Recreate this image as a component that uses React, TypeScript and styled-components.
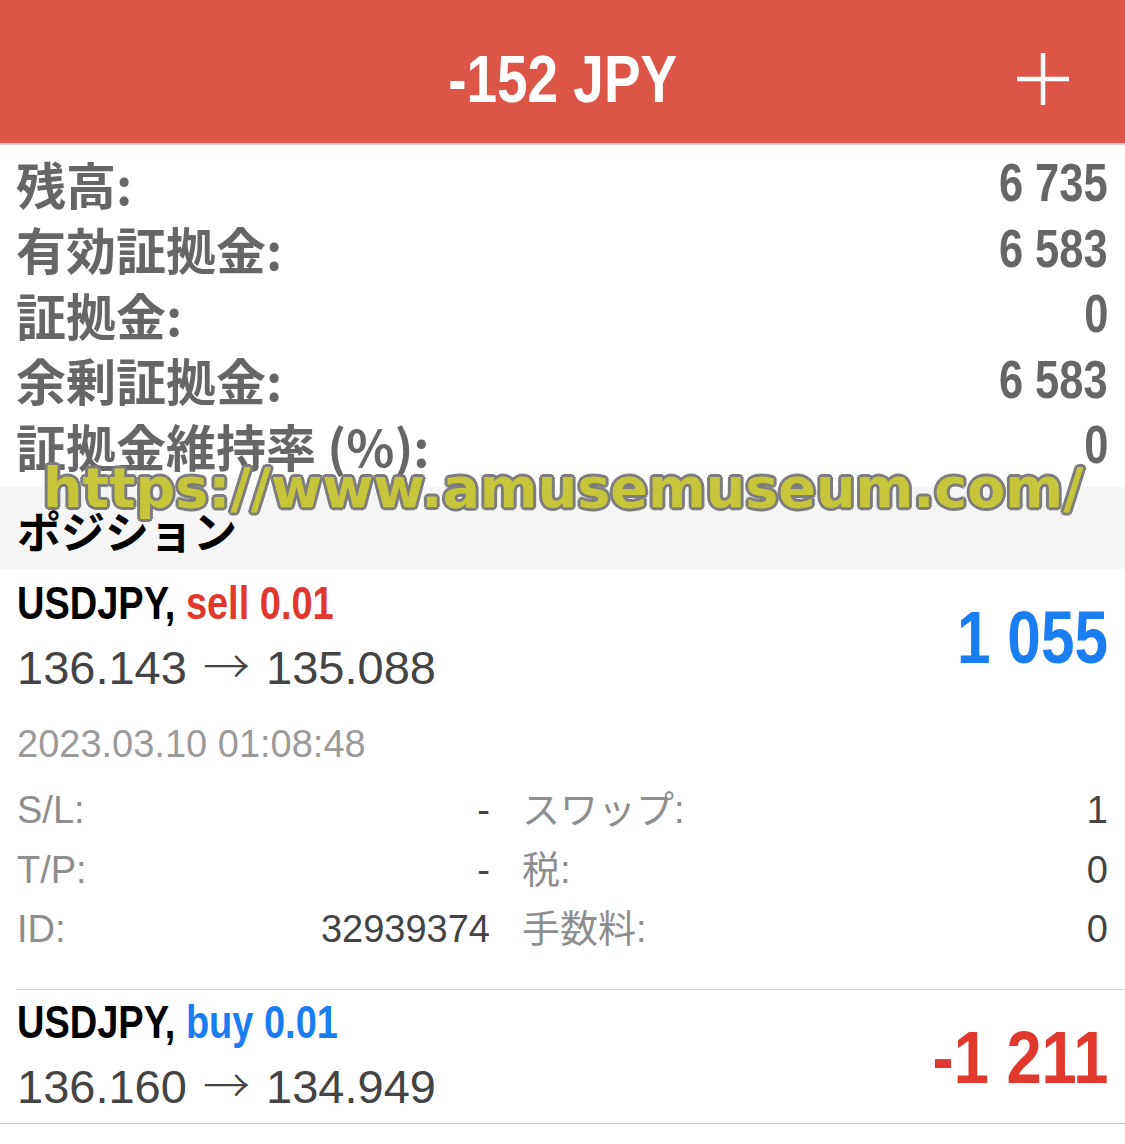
import React from "react";
import styled, { createGlobalStyle, css } from "styled-components";

const GlobalStyle = createGlobalStyle`
  html, body { margin: 0; padding: 0; background: #ffffff; }
  body { font-family: "Liberation Sans", "Noto Sans CJK JP", sans-serif; }
`;

const BOLDSANS = `"Liberation Sans", "Noto Sans CJK JP", sans-serif`;
const CJK = `"Noto Sans CJK JP", "Liberation Sans", sans-serif`;
const REGULAR = `"Liberation Sans", "Noto Sans CJK JP", sans-serif`;

const RED = "#E0382D";
const BLUE = "#1A7EF2";

/* condensed face look: Liberation Sans narrowed to Arial Narrow proportions */
const Condensed = styled.span<{ $origin?: "left" | "right" | "center"; $scale?: number }>`
  display: inline-block;
  white-space: nowrap;
  transform: scaleX(${(p) => p.$scale ?? 0.82});
  transform-origin: ${(p) => p.$origin ?? "left"} center;
`;

const Page = styled.div`
  position: relative;
  width: 1125px;
  min-height: 1144px;
  background: #ffffff;
  overflow: hidden;
`;

const Header = styled.header`
  box-sizing: border-box;
  height: 145px;
  padding-top: 14px;
  background: #dd5546;
  border-bottom: 2px solid #d4cbca;
  display: grid;
  grid-template-columns: 1fr auto 1fr;
  align-items: center;
`;

const Title = styled.h1`
  grid-column: 2;
  margin: 0;
  font: 700 67px/1 ${BOLDSANS};
  color: #ffffff;
`;

const AddButton = styled.button`
  grid-column: 3;
  justify-self: end;
  margin-right: 55px;
  width: 54px;
  height: 54px;
  padding: 0;
  border: 0;
  background: transparent;
  display: flex;
  align-items: center;
  justify-content: center;
`;

const Summary = styled.section`
  padding: 5px 17px 9px 16px;
`;

const SummaryRow = styled.div`
  display: flex;
  justify-content: space-between;
  align-items: center;
  height: 65.5px;
`;

const SummaryLabel = styled.span`
  font: 700 50px/1 ${CJK};
  color: #666666;
`;

const SummaryValue = styled.span`
  font: 700 53px/1 ${BOLDSANS};
  color: #666666;
`;

const SectionHeader = styled.h2`
  box-sizing: border-box;
  margin: 0;
  height: 82px;
  padding: 5px 17px 0;
  display: flex;
  align-items: center;
  background: #f5f5f5;
  font: 700 44px/1 ${CJK};
  color: #000000;
`;

const PositionList = styled.div`
  border-bottom: 1.5px solid #c8c8c8;
`;

const PositionItem = styled.article<{ $divider?: boolean }>`
  padding: 3px 17px 0 17px;
  ${(p) =>
    p.$divider &&
    css`
      margin-left: 16px;
      padding: 1px 17px 4px 1px;
      border-top: 1.5px solid #d0d0d0;
    `}
`;

const PositionHead = styled.div`
  display: grid;
  grid-template-columns: 1fr auto;
  align-items: center;
`;

const SymbolLine = styled.div`
  height: 64px;
  font: 700 45.6px/64px ${BOLDSANS};
  color: #000000;
  white-space: nowrap;
`;

const Side = styled.span<{ $side: "buy" | "sell" }>`
  color: ${(p) => (p.$side === "sell" ? RED : BLUE)};
`;

const PriceLine = styled.div`
  height: 64px;
  font: 400 47px/64px ${REGULAR};
  color: #444444;
  white-space: nowrap;
`;

const Arrow = styled.span`
  font-family: "Noto Sans CJK JP", sans-serif;
  font-weight: 300;
  line-height: 1;
  margin: 0 3px;
`;

const Profit = styled.div<{ $negative?: boolean }>`
  padding-top: 5px;
  font: 700 73.5px/1 ${BOLDSANS};
  color: ${(p) => (p.$negative ? RED : BLUE)};
`;

const DateLine = styled.div`
  margin-top: 14px;
  height: 60px;
  font: 400 38px/60px ${REGULAR};
  color: #9a9a9a;
`;

const DetailGrid = styled.div`
  margin-top: 7px;
  padding-bottom: 30px;
  display: grid;
  grid-template-columns: 473px 1fr;
  grid-auto-rows: 59.5px;
  column-gap: 32px;
  align-items: center;
`;

const DetailCell = styled.div`
  display: flex;
  justify-content: space-between;
  align-items: center;
  font: 400 38px/1 ${REGULAR};
`;

const DetailLabel = styled.span`
  color: #8e8e8e;
`;

const DetailValue = styled.span`
  color: #444444;
`;

const Watermark = styled.div`
  position: absolute;
  top: 460px;
  left: 43px;
  font: 700 55.5px/1 "DejaVu Sans", sans-serif;
  color: #c6c63a;
  white-space: nowrap;
  pointer-events: none;
  text-shadow: 3px 0 0 #7d7d7d, -3px 0 0 #7d7d7d, 0 3px 0 #7d7d7d, 0 -3px 0 #7d7d7d,
    2px 2px 0 #7d7d7d, -2px 2px 0 #7d7d7d, 2px -2px 0 #7d7d7d, -2px -2px 0 #7d7d7d;
`;

const summary = [
  { label: "残高:", value: "6 735" },
  { label: "有効証拠金:", value: "6 583" },
  { label: "証拠金:", value: "0" },
  { label: "余剰証拠金:", value: "6 583" },
  { label: "証拠金維持率 (%):", value: "0" },
];

const details = [
  ["S/L:", "-", "スワップ:", "1"],
  ["T/P:", "-", "税:", "0"],
  ["ID:", "32939374", "手数料:", "0"],
];

export default function App() {
  return (
    <Page>
      <GlobalStyle />
      <Header>
        <Title>
          <Condensed $origin="center">-152 JPY</Condensed>
        </Title>
        <AddButton aria-label="add">
          <svg width="54" height="54" viewBox="0 0 54 54">
            <path d="M27 1V53M1 27H53" stroke="#ffffff" strokeWidth="4.5" fill="none" />
          </svg>
        </AddButton>
      </Header>

      <Summary>
        {summary.map((r) => (
          <SummaryRow key={r.label}>
            <SummaryLabel>{r.label}</SummaryLabel>
            <SummaryValue>
              <Condensed $origin="right">{r.value}</Condensed>
            </SummaryValue>
          </SummaryRow>
        ))}
      </Summary>

      <SectionHeader>ポジション</SectionHeader>

      <PositionList>
        <PositionItem>
          <PositionHead>
            <div>
              <SymbolLine>
                <Condensed $scale={0.833}>
                  USDJPY, <Side $side="sell">sell 0.01</Side>
                </Condensed>
              </SymbolLine>
              <PriceLine>
                136.143 <Arrow>→</Arrow> 135.088
              </PriceLine>
            </div>
            <Profit>
              <Condensed $origin="right">1 055</Condensed>
            </Profit>
          </PositionHead>
          <DateLine>2023.03.10 01:08:48</DateLine>
          <DetailGrid>
            {details.map((d) => (
              <React.Fragment key={d[0]}>
                <DetailCell>
                  <DetailLabel>{d[0]}</DetailLabel>
                  <DetailValue>{d[1]}</DetailValue>
                </DetailCell>
                <DetailCell>
                  <DetailLabel>{d[2]}</DetailLabel>
                  <DetailValue>{d[3]}</DetailValue>
                </DetailCell>
              </React.Fragment>
            ))}
          </DetailGrid>
        </PositionItem>

        <PositionItem $divider>
          <PositionHead>
            <div>
              <SymbolLine>
                <Condensed $scale={0.833}>
                  USDJPY, <Side $side="buy">buy 0.01</Side>
                </Condensed>
              </SymbolLine>
              <PriceLine>
                136.160 <Arrow>→</Arrow> 134.949
              </PriceLine>
            </div>
            <Profit $negative>
              <Condensed $origin="right" $scale={0.86}>
                -1 211
              </Condensed>
            </Profit>
          </PositionHead>
        </PositionItem>
      </PositionList>

      <Watermark>https://www.amusemuseum.com/</Watermark>
    </Page>
  );
}
